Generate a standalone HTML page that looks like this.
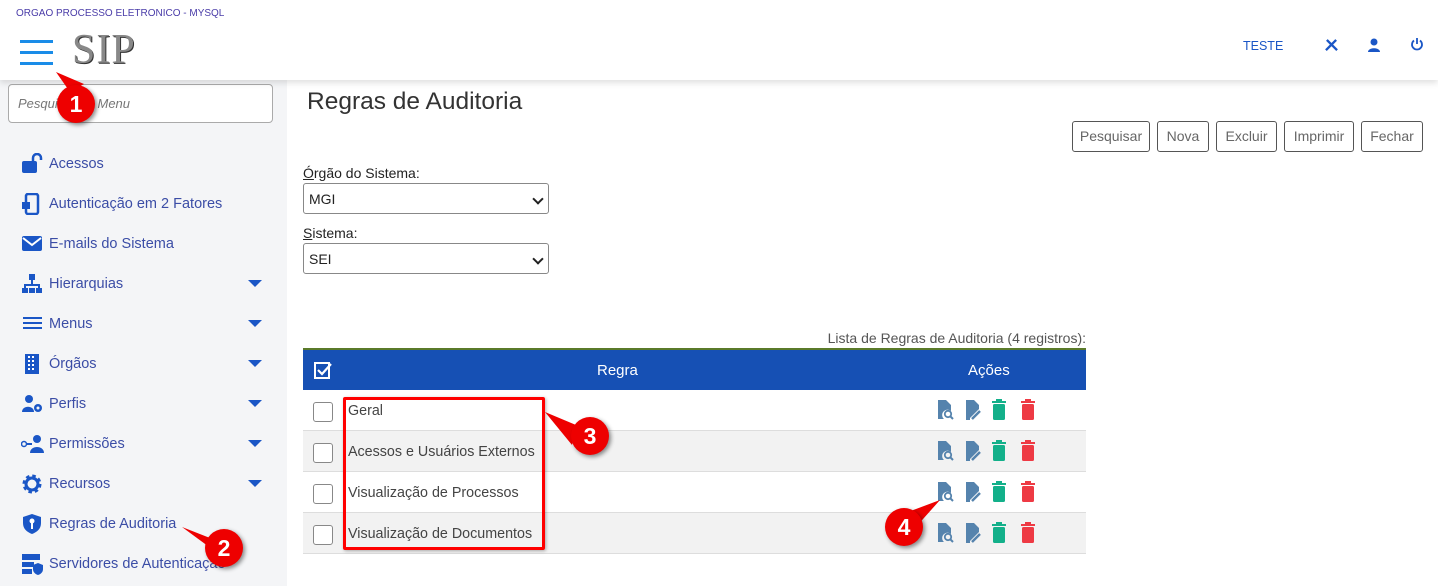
<!DOCTYPE html>
<html><head><meta charset="utf-8"><style>
*{box-sizing:border-box;margin:0;padding:0}
body{width:1438px;height:586px;overflow:hidden;background:#fff;font-family:"Liberation Sans",sans-serif;position:relative;color:#333}
.hdr{position:absolute;left:0;top:0;width:1438px;height:80px;background:#fff;box-shadow:0 3px 6px rgba(0,0,0,.12);z-index:2}
.side{position:absolute;left:0;top:80px;width:287px;height:506px;background:#f4f5f7}
.abs{position:absolute}
.item{position:absolute;left:0;width:287px;height:40px;font-size:14.5px;color:#3b4da6}
.item span{position:absolute;left:49px;top:13px}
.item svg{position:absolute;left:21px;top:10px}
.caret{position:absolute;left:248px;top:17px;width:0;height:0;border-left:7px solid transparent;border-right:7px solid transparent;border-top:7px solid #1a56c6}
.btn{position:absolute;top:121px;height:31px;border:1px solid #555;border-radius:3px;font-size:14px;color:#666;text-align:center;line-height:29px;background:#fff}
.sel{position:absolute;left:303px;width:246px;height:31px;border:1px solid #888;border-radius:3px;font-size:14px;padding:7px 5px;color:#222;background:#fff}
.sel:after{content:"";position:absolute;right:6px;top:11px;width:6px;height:6px;border-right:2px solid #222;border-bottom:2px solid #222;transform:rotate(45deg)}
.row{position:absolute;left:303px;width:783px;height:41px;border-bottom:1px solid #ddd;font-size:14.3px;color:#444}
.row .cb{position:absolute;left:10px;top:12px;width:20px;height:20px;border:1px solid #888;border-radius:3px;background:#fff}
.row .t{position:absolute;left:45px;top:13px}
.row .ic{position:absolute;left:633px;top:9px}
.badge{position:absolute;width:38px;height:38px;border-radius:50%;background:#e00;color:#fff;font-weight:bold;font-size:23px;text-align:center;line-height:38px;box-shadow:2px 2px 4px rgba(0,0,0,.45);z-index:5}
</style></head><body>
<div class="hdr">
 <div class="abs" style="left:16px;top:8px;font-size:10px;color:#4a3ca8">ORGAO PROCESSO ELETRONICO - MYSQL</div>
 <div class="abs" style="left:20px;top:40px;width:33px;height:3px;background:#1a8ce8"></div>
 <div class="abs" style="left:20px;top:51px;width:33px;height:3px;background:#1a8ce8"></div>
 <div class="abs" style="left:20px;top:62px;width:33px;height:3px;background:#1a8ce8"></div>
 <div class="abs" style="left:72px;top:26px;font-family:'Liberation Serif',serif;font-size:42px;color:#888;text-shadow:1px 1px 0 #333;letter-spacing:1px">SIP</div>
 <div class="abs" style="left:1243px;top:39px;font-size:12.5px;color:#1a56c6">TESTE</div>
 <svg class="abs" style="left:1325px;top:39px" width="13" height="13" viewBox="0 0 14 14"><path d="M2 1l11 11M12 1L1 12" stroke="#1a56c6" stroke-width="2.5"/></svg>
 <svg class="abs" style="left:1367px;top:38px" width="14" height="14" viewBox="0 0 14 14"><circle cx="7" cy="4" r="3.5" fill="#1a56c6"/><path d="M1 14c0-5 12-5 12 0z" fill="#1a56c6"/></svg>
 <svg class="abs" style="left:1410px;top:37px" width="14" height="14" viewBox="0 0 14 14"><path d="M4 3.5a5 5 0 1 0 6 0" fill="none" stroke="#1a56c6" stroke-width="1.8"/><path d="M7 1v6" stroke="#1a56c6" stroke-width="1.8"/></svg>
</div>
<div class="side">
 <div class="abs" style="left:8px;top:4px;width:265px;height:39px;border:1px solid #aaa;border-radius:4px;background:#fff;font-size:13px;font-style:italic;color:#777;padding:11px 9px">Pesquisar no Menu</div>
</div>
<div class="item" style="top:143px"><svg width="22" height="20"><rect x="1" y="8" width="15" height="12" rx="2" fill="#1a56c6"/><path d="M12 8V5a4 4 0 0 1 8 0v2" fill="none" stroke="#1a56c6" stroke-width="2.5"/></svg><span>Acessos</span></div>
<div class="item" style="top:183px"><svg width="22" height="22"><rect x="5" y="1" width="12" height="20" rx="2" fill="none" stroke="#1a56c6" stroke-width="2.5"/><rect x="1" y="9" width="8" height="7" fill="#1a56c6"/></svg><span>Autenticação em 2 Fatores</span></div>
<div class="item" style="top:223px"><svg width="22" height="20"><rect x="1" y="3" width="20" height="15" rx="2" fill="#1a56c6"/><path d="M2 5l9 7 9-7" fill="none" stroke="#fff" stroke-width="2"/></svg><span>E-mails do Sistema</span></div>
<div class="item" style="top:263px"><svg width="22" height="22"><rect x="8" y="1" width="6" height="6" fill="#1a56c6"/><path d="M11 7v5M4 15v-3h14v3" stroke="#1a56c6" stroke-width="2" fill="none"/><rect x="1" y="15" width="6" height="5" fill="#1a56c6"/><rect x="8" y="15" width="6" height="5" fill="#1a56c6"/><rect x="15" y="15" width="6" height="5" fill="#1a56c6"/></svg><span>Hierarquias</span><div class="caret"></div></div>
<div class="item" style="top:303px"><svg width="22" height="20"><path d="M2 5h19M2 10h19M2 15h19" stroke="#1a56c6" stroke-width="2"/></svg><span>Menus</span><div class="caret"></div></div>
<div class="item" style="top:343px"><svg width="22" height="22"><rect x="4" y="1" width="14" height="20" fill="#1a56c6"/><path d="M7 4h2M11 4h2M7 8h2M11 8h2M7 12h2M11 12h2M7 16h2M11 16h2" stroke="#fff" stroke-width="2"/></svg><span>Órgãos</span><div class="caret"></div></div>
<div class="item" style="top:383px"><svg width="22" height="22"><circle cx="8" cy="6" r="4" fill="#1a56c6"/><path d="M1 19c0-7 12-7 12 0z" fill="#1a56c6"/><circle cx="17" cy="15" r="4" fill="#1a56c6"/><circle cx="17" cy="15" r="1.5" fill="#f4f5f7"/></svg><span>Perfis</span><div class="caret"></div></div>
<div class="item" style="top:423px"><svg width="24" height="22"><circle cx="3" cy="11" r="2.5" fill="none" stroke="#1a56c6" stroke-width="1.5"/><path d="M5 11h6" stroke="#1a56c6" stroke-width="2"/><circle cx="16" cy="6" r="4" fill="#1a56c6"/><path d="M9 20c0-8 14-8 14 0z" fill="#1a56c6"/></svg><span>Permissões</span><div class="caret"></div></div>
<div class="item" style="top:463px"><svg width="22" height="22"><circle cx="11" cy="11" r="7" fill="none" stroke="#1a56c6" stroke-width="5" stroke-dasharray="3 2.5"/><circle cx="11" cy="11" r="6" fill="none" stroke="#1a56c6" stroke-width="3"/></svg><span>Recursos</span><div class="caret"></div></div>
<div class="item" style="top:503px"><svg width="22" height="22"><path d="M11 1l9 3v6c0 6-4 9-9 11-5-2-9-5-9-11V4z" fill="#1a56c6"/><circle cx="11" cy="8" r="2.5" fill="#fff"/><path d="M11 10v6" stroke="#fff" stroke-width="2"/></svg><span>Regras de Auditoria</span></div>
<div class="item" style="top:543px"><svg width="22" height="22"><rect x="1" y="1" width="18" height="6" fill="#1a56c6"/><rect x="1" y="9" width="12" height="5" fill="#1a56c6"/><rect x="1" y="16" width="10" height="5" fill="#1a56c6"/><path d="M17 10l5 2v4c0 3-2 5-5 6-3-1-5-3-5-6v-4z" fill="#1a56c6"/></svg><span>Servidores de Autenticação</span></div>

<div class="abs" style="left:307px;top:88px;font-size:24.5px;color:#333">Regras de Auditoria</div>
<div class="btn" style="left:1072px;width:78px">Pesquisar</div>
<div class="btn" style="left:1157px;width:52px">Nova</div>
<div class="btn" style="left:1216px;width:61px">Excluir</div>
<div class="btn" style="left:1284px;width:70px">Imprimir</div>
<div class="btn" style="left:1361px;width:62px">Fechar</div>
<div class="abs" style="left:303px;top:165px;font-size:14px;color:#222"><u>Ó</u>rgão do Sistema:</div>
<div class="sel" style="top:183px">MGI</div>
<div class="abs" style="left:303px;top:225px;font-size:14px;color:#222"><u>S</u>istema:</div>
<div class="sel" style="top:243px">SEI</div>
<div class="abs" style="left:600px;top:330px;width:486px;text-align:right;font-size:14px;color:#555">Lista de Regras de Auditoria (4 registros):</div>
<div class="abs" style="left:303px;top:348px;width:783px;height:2px;background:#5a7a2a"></div>
<div class="abs" style="left:303px;top:350px;width:783px;height:40px;background:#1650b4;color:#fff;font-size:15px">
 <svg class="abs" style="left:10px;top:10px" width="20" height="20"><path d="M2 3h14v15H2z" fill="none" stroke="#fff" stroke-width="2"/><path d="M5 10l4 4 9-10" fill="none" stroke="#fff" stroke-width="2.2"/></svg>
 <div class="abs" style="left:294px;top:12px">Regra</div>
 <div class="abs" style="left:665px;top:12px">Ações</div>
</div>
<div class="row" style="top:390px;background:#fff"><div class="cb"></div><div class="t">Geral</div><div class="ic">ICONS</div></div>
<div class="row" style="top:431px;background:#f2f2f2"><div class="cb"></div><div class="t">Acessos e Usuários Externos</div><div class="ic">ICONS</div></div>
<div class="row" style="top:472px;background:#fff"><div class="cb"></div><div class="t">Visualização de Processos</div><div class="ic">ICONS</div></div>
<div class="row" style="top:513px;background:#f2f2f2"><div class="cb"></div><div class="t">Visualização de Documentos</div><div class="ic">ICONS</div></div>

<div class="abs" style="left:343px;top:397px;width:202px;height:153px;border:3px solid #f00;border-radius:2px;z-index:4;box-shadow:1px 1px 3px rgba(0,0,0,.3)"></div>
<svg class="abs" style="left:0;top:0;z-index:4" width="1438" height="586"><path d="M56 72L70 92 84 84z" fill="#e00"/><path d="M182 527L210 538 216 552z" fill="#e00"/><path d="M545 412L576 425 572 445z" fill="#e00"/><path d="M940 500L900 515 915 528z" fill="#e00"/></svg>
<div class="badge" style="left:57px;top:85px">1</div>
<div class="badge" style="left:205px;top:529px">2</div>
<div class="badge" style="left:571px;top:417px">3</div>
<div class="badge" style="left:885px;top:508px">4</div>
<script>
var ic='<svg width="120" height="22" viewBox="0 0 120 22"><path d="M2 1h8l5 5v6a5 5 0 0 0-7 8H2z" fill="#5583ad"/><circle cx="12" cy="15" r="3.2" fill="none" stroke="#5583ad" stroke-width="1.8"/><path d="M14 17l3 3" stroke="#5583ad" stroke-width="2"/><path d="M30 1h8l5 5v4l-9 9v2h-4z" fill="#5583ad"/><path d="M36 20l8-8" stroke="#5583ad" stroke-width="2.5"/><rect x="57" y="5" width="12" height="16" rx="1.5" fill="#13b08a"/><rect x="56" y="2" width="14" height="2" fill="#13b08a"/><rect x="60" y="0" width="6" height="2" fill="#13b08a"/><rect x="86" y="5" width="12" height="16" rx="1.5" fill="#ee3a44"/><rect x="85" y="2" width="14" height="2" fill="#ee3a44"/><rect x="89" y="0" width="6" height="2" fill="#ee3a44"/></svg>';
document.querySelectorAll('.ic').forEach(function(e){e.innerHTML=ic});
</script>
</body></html>
